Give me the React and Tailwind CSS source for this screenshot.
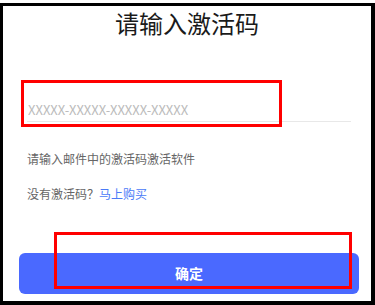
export default function App() {
  return (
    <div
      className="relative w-[375px] h-[305px] bg-white pt-[3px]"
      style={{ fontFamily: '"Noto Sans CJK SC", "Noto Sans", sans-serif' }}
    >
      <div className="h-[302px] border-l-[3px] border-t-[3px] border-r-4 border-b-4 border-black flex flex-col">
        <div className="h-[34px] flex items-center justify-center text-[24px] text-[#1a1a1a]">
          请输入激活码
        </div>

        <div className="mt-[56px] mx-[24px] mr-[20px] border-b border-[#e8e8e8]">
          <input
            className="w-full h-[23px] px-[1px] text-[13px] outline-none placeholder:text-[#bbbbbb] bg-transparent"
            placeholder="XXXXX-XXXXX-XXXXX-XXXXX"
          />
        </div>

        <p className="mt-[27px] ml-[24px] h-[20px] leading-[20px] text-[12px] text-[#666666]">
          请输入邮件中的激活码激活软件
        </p>
        <p className="mt-[15px] ml-[24px] h-[20px] leading-[20px] text-[12px] text-[#666666]">
          没有激活码？<span className="text-[#4a7af7]">马上购买</span>
        </p>

        <button className="mt-[49px] mx-[16px] mr-[12px] h-[41px] rounded-[6px] bg-[#4a69ff] text-white text-[14px] font-bold">
          确定
        </button>
      </div>

      <div className="absolute left-[21px] top-[80px] w-[261px] h-[47px] border-[3px] border-[#ff0000]" />
      <div className="absolute left-[54px] top-[232px] w-[298px] h-[57px] border-[3px] border-[#ff0000]" />
    </div>
  );
}
